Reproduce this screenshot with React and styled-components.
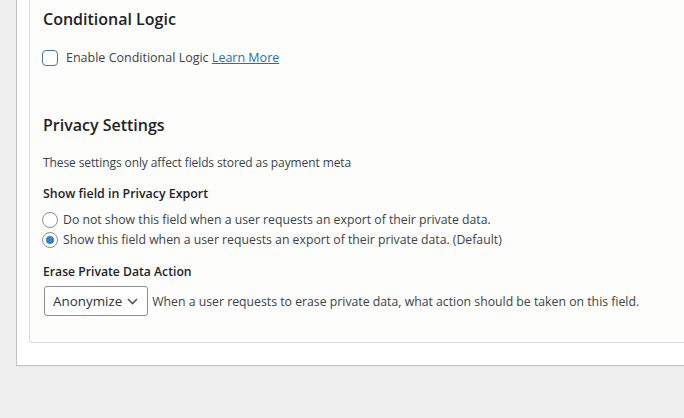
import styled, { createGlobalStyle } from 'styled-components'

const Global = createGlobalStyle`
    html, body{
        margin: 0;
        padding: 0;
        background: #f0f0f1;
        font-family: "Open Sans", "Noto Sans", sans-serif;
        color: #3c434a;
    }
`

function App() {
    return (
        <div>
            <Global />
            <Page>
                <Outer>
                    <Inner>
                        <Heading>Conditional Logic</Heading>
                        <CheckRow>
                            <Check />
                            <span>Enable Conditional Logic <a href="#">Learn More</a></span>
                        </CheckRow>

                        <Heading $top={43}>Privacy Settings</Heading>
                        <Text>These settings only affect fields stored as payment meta</Text>
                        <Label>Show field in Privacy Export</Label>
                        <Radios>
                            <RadioRow>
                                <Radio />
                                Do not show this field when a user requests an export of their private data.
                            </RadioRow>
                            <RadioRow>
                                <Radio $checked />
                                Show this field when a user requests an export of their private data. (Default)
                            </RadioRow>
                        </Radios>
                        <Label $top={12} $size={12.2}>Erase Private Data Action</Label>
                        <SelectRow>
                            <Select>
                                Anonymize
                                <svg width="11" height="7" viewBox="0 0 11 7">
                                    <path d="M1 1l4.5 4.5L10 1" fill="none" stroke="#50575e" strokeWidth="1.6" />
                                </svg>
                            </Select>
                            <span>When a user requests to erase private data, what action should be taken on this field.</span>
                        </SelectRow>
                    </Inner>
                </Outer>
            </Page>
        </div>
    )
}

const Page = styled.div`
    height: 418px;
    padding-left: 16px;
    overflow: hidden;
`
const Outer = styled.div`
    background: #fff;
    border-left: 1px solid #c3c4c7;
    border-bottom: 1px solid #c3c4c7;
    box-shadow: 0 1px 1px rgba(0,0,0,0.04);
    padding: 0 0 22px 12px;
`
const Inner = styled.div`
    background: #fdfdfc;
    border-left: 1px solid #dcdcde;
    border-bottom: 1px solid #dcdcde;
    border-bottom-left-radius: 3px;
    padding: 6px 0 26px 12px;
`
const Heading = styled.h2`
    margin: ${p => p.$top || 0}px 0 0 1px;
    font-size: 16px;
    font-weight: 600;
    line-height: 26px;
    color: #1d2327;
`
const CheckRow = styled.label`
    display: flex;
    align-items: center;
    gap: 8px;
    margin-top: 15px;
    font-size: 12.5px;
    line-height: 22px;
    a{
        color: #2271b1;
    }
`
const Check = styled.span`
    width: 14px;
    height: 14px;
    border: 1.5px solid #4a76a3;
    border-radius: 4px;
    background: #fff;
`
const Text = styled.p`
    margin: 15px 0 0 1px;
    font-size: 12px;
    letter-spacing: -0.1px;
    line-height: 20px;
`
const Label = styled.div`
    margin: ${p => p.$top || 11}px 0 0 1px;
    font-size: ${p => p.$size || 12.4}px;
    font-weight: 600;
    line-height: 20px;
    color: #1d2327;
`
const Radios = styled.div`
    margin-top: 6px;
`
const RadioRow = styled.label`
    display: flex;
    align-items: center;
    gap: 5px;
    font-size: 12.25px;
    line-height: 20px;
`
const Radio = styled.span`
    position: relative;
    width: 14px;
    height: 14px;
    border: 1px solid #8c8f94;
    border-radius: 50%;
    background: #fff;
    &::after{
        content: '';
        display: ${p => p.$checked ? 'block' : 'none'};
        position: absolute;
        left: 3px;
        top: 3px;
        width: 8px;
        height: 8px;
        border-radius: 50%;
        background: #3582c4;
    }
`
const SelectRow = styled.div`
    display: flex;
    align-items: center;
    gap: 4px;
    margin-top: 4px;
    font-size: 12.27px;
`
const Select = styled.div`
    display: flex;
    align-items: center;
    gap: 5px;
    height: 28px;
    padding: 0 9px 0 8px;
    margin-left: 2px;
    border: 1px solid #8c8f94;
    border-radius: 3px;
    background: #fff;
    font-size: 13.4px;
    color: #2c3338;
`

export default App
